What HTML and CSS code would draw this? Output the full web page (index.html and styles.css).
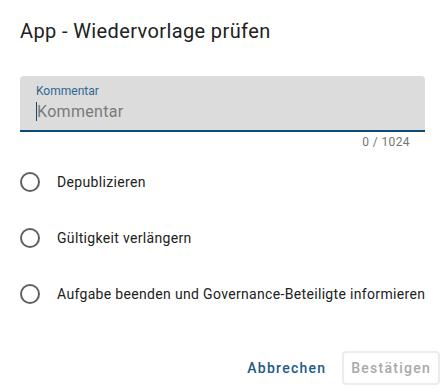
FILE: index.html
```html
<!DOCTYPE html>
<html lang="de">
<head>
<meta charset="utf-8">
<link rel="stylesheet" href="styles.css">
</head>
<body>
<div class="dialog">
  <h2 class="title">App - Wiedervorlage prüfen</h2>
  <div class="content">
    <div class="field">
      <div class="field-box">
        <label class="field-label">Kommentar</label>
        <div class="field-input"><span class="caret"></span><span class="placeholder">Kommentar</span></div>
      </div>
      <div class="field-hint">0 / 1024</div>
    </div>
    <div class="radios">
      <div class="radio"><span class="radio-circle"></span><span class="radio-label">Depublizieren</span></div>
      <div class="radio"><span class="radio-circle"></span><span class="radio-label">Gültigkeit verlängern</span></div>
      <div class="radio"><span class="radio-circle"></span><span class="radio-label">Aufgabe beenden und Governance-Beteiligte informieren</span></div>
    </div>
  </div>
  <div class="actions">
    <button class="btn btn-text">Abbrechen</button>
    <button class="btn btn-outline" disabled>Bestätigen</button>
  </div>
</div>
</body>
</html>
```
FILE: styles.css
```css
html, body {
  margin: 0;
  padding: 0;
  background: #fff;
  font-family: Roboto, "Liberation Sans", sans-serif;
}
.dialog {
  width: 447px;
  height: 392px;
  box-sizing: border-box;
  display: flex;
  flex-direction: column;
}
.title {
  margin: 0;
  padding: 15px 20px 0 20px;
  font-size: 20px;
  line-height: 32px;
  font-weight: 400;
  color: #212121;
  letter-spacing: 0.38px;
}
.content {
  padding: 29px 0 0 20px;
}
.field {
  width: 405px;
}
.field-box {
  background: #dcdcdc;
  border-radius: 4px 4px 0 0;
  border-bottom: 2px solid #0c4a78;
  height: 56px;
  box-sizing: border-box;
  padding: 8px 16px 0 16px;
}
.field-label {
  display: block;
  font-size: 12px;
  line-height: 14px;
  color: #2f6892;
}
.field-input {
  display: flex;
  align-items: center;
  height: 26px;
  font-size: 16px;
  color: #7a7a7a;
  letter-spacing: 0.3px;
}
.caret {
  width: 1px;
  height: 19px;
  background: #0c4a78;
}
.field-hint {
  text-align: right;
  font-size: 12px;
  line-height: 14px;
  color: #757575;
  padding: 3px 15px 0 0;
  letter-spacing: 0.4px;
}
.radios {
  display: flex;
  flex-direction: column;
  padding-top: 5px;
}
.radio {
  display: flex;
  align-items: center;
  height: 56px;
  gap: 17px;
}
.radio-circle {
  width: 20px;
  height: 20px;
  box-sizing: border-box;
  border: 2px solid #616161;
  border-radius: 50%;
  flex: none;
}
.radio-label {
  font-size: 14px;
  color: #212121;
  letter-spacing: 0.33px;
  white-space: nowrap;
}
.actions {
  margin-top: auto;
  display: flex;
  justify-content: flex-end;
  align-items: center;
  gap: 8px;
  padding: 0 7px 7px 0;
}
.btn {
  font-family: Roboto, "Liberation Sans", sans-serif;
  font-size: 14px;
  font-weight: 500;
  letter-spacing: 1.25px;
  height: 34px;
  padding: 0 8px;
  border-radius: 4px;
  background: transparent;
  border: none;
}
.btn-text {
  color: #1d5a88;
}
.btn-outline {
  border: 2px solid #ececec;
  color: #a9a9a9;
  padding: 0 7px;
}
```
